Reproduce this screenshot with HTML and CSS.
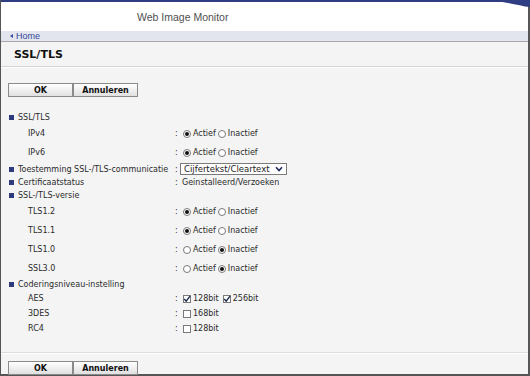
FILE: index.html
```html
<!DOCTYPE html>
<html>
<head>
<meta charset="utf-8">
<link rel="stylesheet" href="styles.css">
</head>
<body>
<div class="frame">
  <div class="topbar"></div>
  <svg class="corner" viewBox="0 0 36 8" width="36" height="8"><path d="M0 0 H36 V7 C26 6 16 2 0 1.5 Z" fill="#2f3d82"/></svg>
  <header class="head"><span>Web Image Monitor</span></header>
  <nav class="crumb"><span class="tri"></span><span>Home</span></nav>
  <h1 class="title">SSL/TLS</h1>
  <div class="btns top"><button class="btn">OK</button><button class="btn">Annuleren</button></div>

  <div class="form">
    <div class="row h"><div class="lab head-lab"><span class="sq"></span>SSL/TLS</div></div>
    <div class="row r"><div class="lab sub">IPv4</div><div class="colon">:</div><div class="opts"><span class="radio on"></span><span>Actief</span><span class="radio"></span><span>Inactief</span></div></div>
    <div class="row r"><div class="lab sub">IPv6</div><div class="colon">:</div><div class="opts"><span class="radio on"></span><span>Actief</span><span class="radio"></span><span>Inactief</span></div></div>
    <div class="row s"><div class="lab head-lab"><span class="sq"></span>Toestemming SSL-/TLS-communicatie</div><div class="colon">:</div><div class="select"><span>Cijfertekst/Cleartext</span><svg class="chev" viewBox="0 0 8 6" width="8" height="6"><path d="M1 1.2 L4 4.5 L7 1.2" fill="none" stroke="#1d2a5c" stroke-width="1.6"/></svg></div></div>
    <div class="row h"><div class="lab head-lab"><span class="sq"></span>Certificaatstatus</div><div class="colon">:</div><div class="val">Geinstalleerd/Verzoeken</div></div>
    <div class="row h"><div class="lab head-lab"><span class="sq"></span>SSL-/TLS-versie</div></div>
    <div class="row r"><div class="lab sub">TLS1.2</div><div class="colon">:</div><div class="opts"><span class="radio on"></span><span>Actief</span><span class="radio"></span><span>Inactief</span></div></div>
    <div class="row r"><div class="lab sub">TLS1.1</div><div class="colon">:</div><div class="opts"><span class="radio on"></span><span>Actief</span><span class="radio"></span><span>Inactief</span></div></div>
    <div class="row r"><div class="lab sub">TLS1.0</div><div class="colon">:</div><div class="opts"><span class="radio"></span><span>Actief</span><span class="radio on"></span><span>Inactief</span></div></div>
    <div class="row r"><div class="lab sub">SSL3.0</div><div class="colon">:</div><div class="opts"><span class="radio"></span><span>Actief</span><span class="radio on"></span><span>Inactief</span></div></div>
    <div class="row h"><div class="lab head-lab"><span class="sq"></span>Coderingsniveau-instelling</div></div>
    <div class="row c"><div class="lab sub">AES</div><div class="colon">:</div><div class="opts"><span class="check on"><svg viewBox="0 0 8 8" width="8" height="8"><path d="M1.2 4 L3.2 6.2 L7 1.2" fill="none" stroke="#1d2a4c" stroke-width="1.4"/></svg></span><span class="ctext">128bit</span><span class="check on gap"><svg viewBox="0 0 8 8" width="8" height="8"><path d="M1.2 4 L3.2 6.2 L7 1.2" fill="none" stroke="#1d2a4c" stroke-width="1.4"/></svg></span><span class="ctext">256bit</span></div></div>
    <div class="row c"><div class="lab sub">3DES</div><div class="colon">:</div><div class="opts"><span class="check"></span><span class="ctext">168bit</span></div></div>
    <div class="row c"><div class="lab sub">RC4</div><div class="colon">:</div><div class="opts"><span class="check"></span><span class="ctext">128bit</span></div></div>
  </div>

  <div class="sep"></div>
  <div class="btns bottom"><button class="btn">OK</button><button class="btn">Annuleren</button></div>
</div>
</body>
</html>
```

FILE: styles.css
```css
* { box-sizing: border-box; }
html, body { margin: 0; padding: 0; }
body {
  width: 530px;
  height: 376px;
  overflow: hidden;
  font-family: "DejaVu Sans", Verdana, sans-serif;
  font-size: 8px;
  color: #2a2a2a;
}
.frame {
  position: relative;
  width: 530px;
  height: 376px;
  border-left: 1px solid #555;
  border-right: 2px solid #555;
  border-bottom: 2px solid #555;
  background: #f4f4f4;
  display: flex;
  flex-direction: column;
}
.topbar { height: 2px; background: #2f3d82; flex: none; }
.corner { position: absolute; top: 0; right: -2px; }
.head {
  height: 29px;
  flex: none;
  background: #fff;
  padding-left: 136px;
  display: flex;
  align-items: center;
  font-family: "Liberation Sans", Arial, sans-serif;
  font-size: 10.5px;
  color: #505050;
}
.crumb {
  height: 11px;
  flex: none;
  background: #e3e5ee;
  border-bottom: 1px solid #a8a8a8;
  padding-left: 9px;
  display: flex;
  align-items: center;
  gap: 3px;
  font-family: "Liberation Sans", Arial, sans-serif;
  font-size: 9px;
  color: #3548a0;
}
.tri {
  width: 0;
  height: 0;
  border-top: 2.5px solid transparent;
  border-bottom: 2.5px solid transparent;
  border-right: 3px solid #3548a0;
}
.title {
  margin: 0;
  height: 25px;
  flex: none;
  padding-left: 13px;
  font-size: 11px;
  font-weight: bold;
  line-height: 25px;
  color: #111;
  border-bottom: 1px solid #d4d4d4;
  box-shadow: 0 1px 0 #fff;
}
.btns { display: flex; padding-left: 7px; flex: none; }
.btns.top { margin-top: 16px; }
.btns.bottom { margin-top: 8px; }
.btn {
  width: 65px;
  height: 14px;
  margin: 0;
  padding: 0;
  border: 1px solid #8a8a8a;
  border-radius: 0;
  background: linear-gradient(#ffffff, #e0e0e0);
  font-family: "DejaVu Sans", Verdana, sans-serif;
  font-weight: bold;
  font-size: 8px;
  color: #111;
  display: flex;
  align-items: center;
  justify-content: center;
}
.form { margin-top: 14px; padding-left: 8px; flex: none; }
.row {
  display: grid;
  grid-template-columns: 166px 7px auto;
  align-items: center;
}
.row.h { height: 13px; }
.row.r { height: 19px; }
.row.s { height: 14px; }
.row.c { height: 15px; }
.lab { white-space: nowrap; }
.head-lab { display: flex; align-items: center; gap: 4px; }
.sq { width: 5px; height: 5px; background: #2d3a7c; flex: none; }
.sub { padding-left: 19px; }
.opts { display: flex; align-items: center; gap: 2px; margin-left: 1px; }
.radio {
  width: 8px;
  height: 8px;
  border: 1px solid #7a7a7a;
  border-radius: 50%;
  background: #fff;
  display: inline-flex;
  align-items: center;
  justify-content: center;
  flex: none;
}
.radio.on::after {
  content: "";
  width: 4px;
  height: 4px;
  border-radius: 50%;
  background: #111;
}
.check {
  width: 8px;
  height: 8px;
  border: 1px solid #7a7a7a;
  background: #fff;
  display: inline-flex;
  align-items: center;
  justify-content: center;
  flex: none;
  overflow: visible;
}
.check svg { flex: none; }
.check.gap { margin-left: 2px; }
.select {
  margin-left: -2px;
  width: 107px;
  height: 12px;
  border: 1px solid #7a7a7a;
  background: #fff;
  display: flex;
  align-items: center;
  justify-content: space-between;
  padding: 0 3px 0 3px;
  font-size: 8.5px;
  color: #222;
}
.chev { flex: none; }
.sep {
  margin-top: 16px;
  height: 1px;
  flex: none;
  background: #dcdcdc;
  box-shadow: 0 1px 0 #fff;
}
```
